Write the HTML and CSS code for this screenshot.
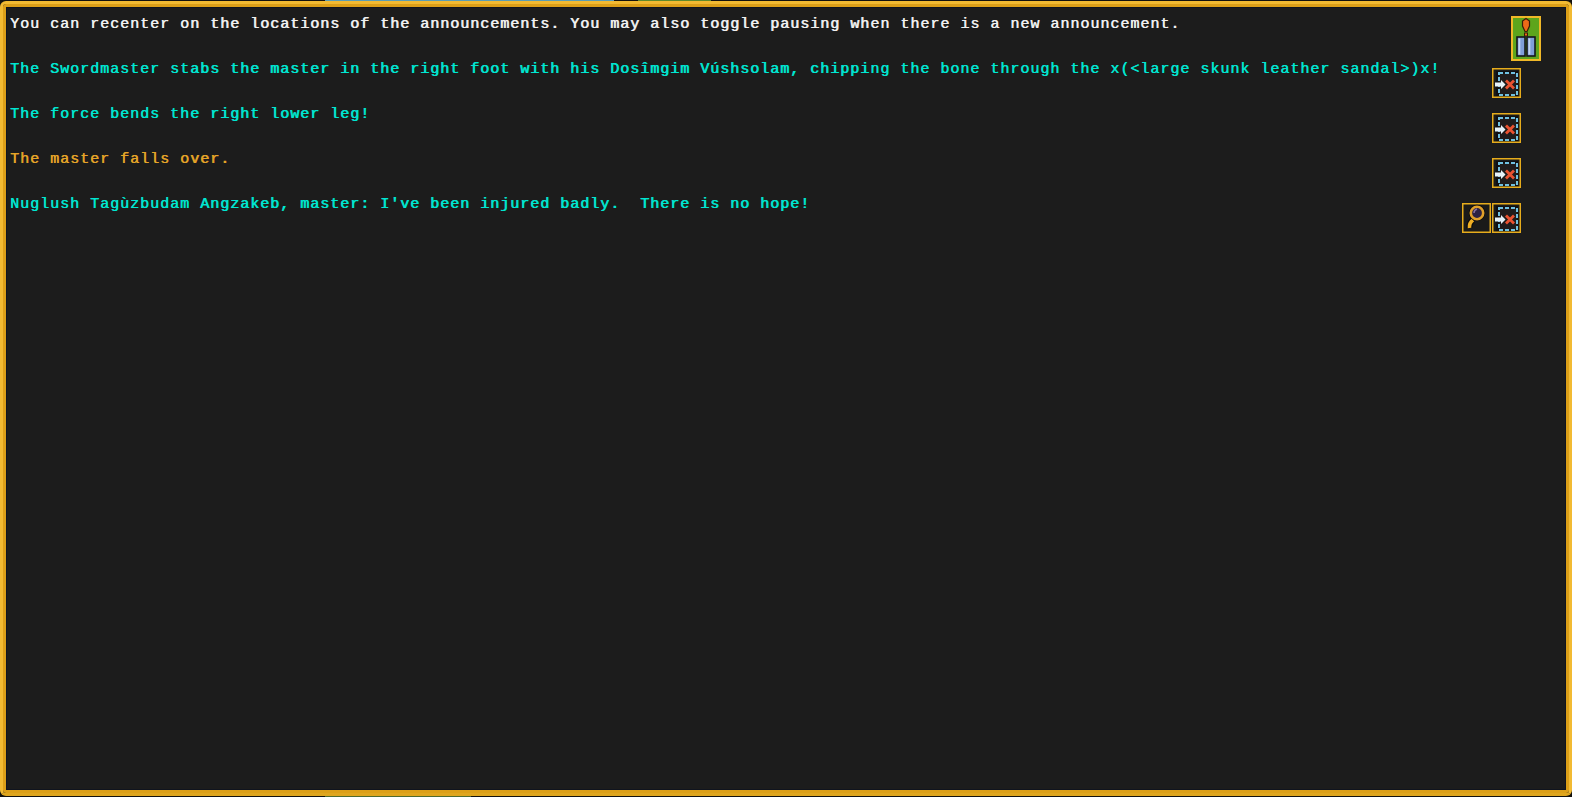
FILE: index.html
```html
<!DOCTYPE html>
<html lang="en">
<head>
  <meta charset="UTF-8">
  <title>Announcements</title>
  <link rel="stylesheet" href="styles.css">
</head>
<body>
  <svg class="sprites" width="0" height="0">
    <symbol id="dismiss" viewBox="0 0 29 30">
      <rect x="0.75" y="0.75" width="27.5" height="28.5" fill="#1a1a19" stroke="#e6ac1c" stroke-width="1.5"/>
      <rect x="4" y="3" width="22" height="25" fill="#101012"/>
      <rect x="7" y="5" width="18" height="22" fill="#201c1c" stroke="#70c0e0" stroke-width="2" stroke-dasharray="4 2"/>
      <path d="M3 14.500h6V12l4.500 4.500L9 21v-2.500H3z" fill="#e6f2f8"/>
      <path d="M14 12.500l8 8M22 12.500l-8 8" stroke="#ea5230" stroke-width="2.800" fill="none"/>
    </symbol>
    <symbol id="zoom" viewBox="0 0 29 30">
      <rect x="0.75" y="0.75" width="27.5" height="28.5" fill="#1a1a19" stroke="#e6ac1c" stroke-width="1.5"/>
      <path d="M11 17q-4 3-3.500 8" stroke="#0c0c0c" stroke-width="6" fill="none"/>
      <path d="M11 17q-4 3-3.500 8" stroke="#eeae24" stroke-width="3.600" fill="none"/>
      <circle cx="15" cy="10" r="8.200" fill="#0c0c0c"/>
      <circle cx="15" cy="10" r="6.200" fill="#2c2244" stroke="#e0a02a" stroke-width="2.600"/>
      <path d="M12 10q0-3 3-4" fill="none" stroke="#86709e" stroke-width="1.500"/>
    </symbol>
    <symbol id="pause" viewBox="0 0 30 45">
      <rect x="1" y="1" width="28" height="43" fill="#5da51c" stroke="#f0b828" stroke-width="2"/>
      <path d="M15 2.500l-3.500 2.500v5l2.500 5.500h2l2.500-5.500V5z" fill="#ee6a18" stroke="#3a1c08" stroke-width="1.200"/>
      <rect x="13.500" y="17" width="3" height="3" fill="#ee6a18" stroke="#3a1c08"/>
      <rect x="6" y="21" width="8" height="19" fill="#7f9fd8" stroke="#14161c" stroke-width="1.600"/>
      <rect x="16" y="21" width="8" height="19" fill="#7f9fd8" stroke="#14161c" stroke-width="1.600"/>
      <rect x="7.500" y="22.500" width="1.800" height="16" fill="#c4d4f0"/>
      <rect x="17.500" y="22.500" width="1.800" height="16" fill="#c4d4f0"/>
    </symbol>
  </svg>

  <div class="edge edge-top"><i class="sky"></i><i class="moss"></i></div>
  <main class="frame">
    <div class="row">
      <p class="msg white">You can recenter on the locations of the announcements. You may also toggle pausing when there is a new announcement.</p>
      <svg class="btn-pause"><use href="#pause"/></svg>
    </div>
    <div class="row">
      <p class="msg cyan">The Swordmaster stabs the master in the right foot with his Dosîmgim Vúshsolam, chipping the bone through the x(&lt;large skunk leather sandal&gt;)x!</p>
      <svg class="btn"><use href="#dismiss"/></svg>
    </div>
    <div class="row">
      <p class="msg cyan">The force bends the right lower leg!</p>
      <svg class="btn"><use href="#dismiss"/></svg>
    </div>
    <div class="row">
      <p class="msg orange">The master falls over.</p>
      <svg class="btn"><use href="#dismiss"/></svg>
    </div>
    <div class="row">
      <p class="msg cyan">Nuglush Tagùzbudam Angzakeb, master: I've been injured badly.  There is no hope!</p>
      <svg class="btn btn-zoom"><use href="#zoom"/></svg>
      <svg class="btn"><use href="#dismiss"/></svg>
    </div>
  </main>
  <div class="edge edge-bottom"><i class="dirt"></i></div>
</body>
</html>
```
FILE: styles.css
```css
html, body {
  margin: 0;
  height: 100%;
  background: #14120e;
  overflow: hidden;
}
body {
  display: flex;
  flex-direction: column;
}
.sprites {
  display: none;
}
.edge {
  height: 1px;
  flex: none;
  display: flex;
}
.edge-top .sky {
  width: 289px;
  margin-left: 325px;
  background: #5a9cb4;
}
.edge-top .moss {
  width: 73px;
  margin-left: 24px;
  background: #5f8a2c;
}
.edge-bottom .dirt {
  width: 146px;
  margin-left: 325px;
  background: #4f6a2e;
}
/* gold frame: bright outer band, darker inner band, thin navy line */
.frame {
  flex: 1;
  box-sizing: border-box;
  padding: 4px 3px 3px;
  background: #1c1c1c;
  border: 3px solid #f2ba32;
  border-bottom-color: #dfa61e;
  border-radius: 6px;
  box-shadow: inset 0 0 0 3px #dc9f18, inset 0 0 0 4px #10141e;
}
.row {
  display: flex;
  align-items: flex-end;
  height: 45px;
  padding-left: 4px;
  padding-right: 45px;
}
.msg {
  flex: 1;
  align-self: flex-start;
  margin: 7px 0 0;
  height: 20px;
  font: 15px/20px "Liberation Mono", monospace;
  letter-spacing: 1px;
  text-shadow: 0.6px 0 0 currentColor;
  white-space: pre;
}
.white { color: #f0f0f0; }
.cyan { color: #00e6d2; }
.orange { color: #e4a428; }
.btn {
  flex: none;
  width: 29px;
  height: 30px;
}
.btn-zoom {
  margin-right: 1px;
}
.btn-pause {
  flex: none;
  width: 30px;
  height: 45px;
  align-self: flex-start;
  margin: 8px -20px -8px 0;
}
```
